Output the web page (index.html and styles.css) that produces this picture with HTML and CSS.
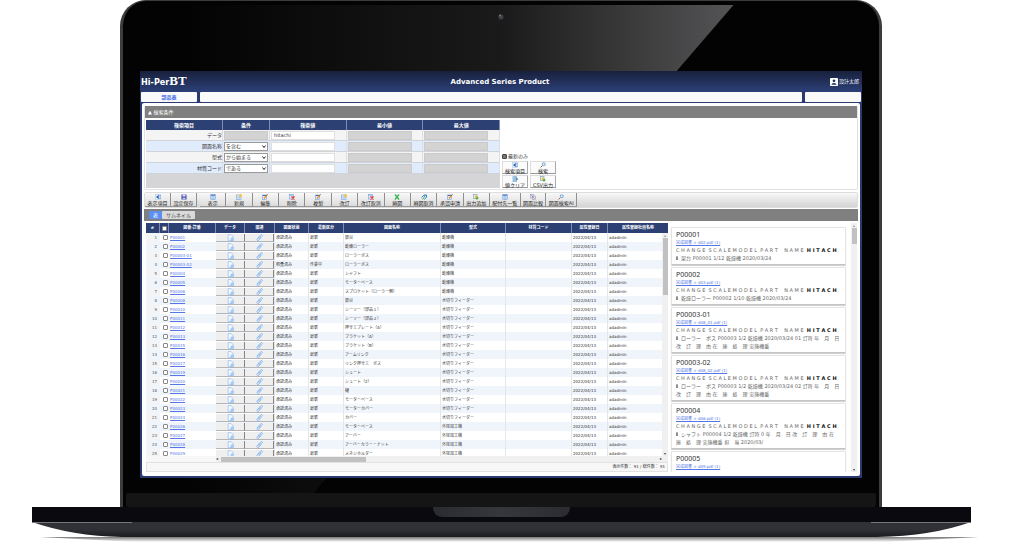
FILE: index.html
```html
<!DOCTYPE html>
<html lang="ja">
<head>
<meta charset="utf-8">
<title>Advanced Series Product</title>
<link rel="stylesheet" href="styles.css">
</head>
<body>
<svg class="sprite" aria-hidden="true">
  <symbol id="i-cols" viewBox="0 0 12 12"><rect x="1" y="1" width="10" height="10" fill="#e6f0fb" stroke="#a9c4e6"/><path d="M7 2v8M9 3h2M9 6h2M9 9h2" stroke="#2c6fc4" stroke-width="1.5"/><path d="M6 3L2 6l4 3z" fill="#2f5f9e"/></symbol>
  <symbol id="i-save" viewBox="0 0 12 12"><path d="M1 1h9l1 1v9H1z" fill="#3b3f9c"/><rect x="3" y="1" width="6" height="4" fill="#e8ecff"/><rect x="3" y="7" width="6" height="4" fill="#b9c1ea"/></symbol>
  <symbol id="i-list" viewBox="0 0 12 12"><rect x="1.500" y="1" width="9" height="10" fill="#dbe9fb" stroke="#5d8fd4"/><path d="M2 2.500h8" stroke="#3c6fc2" stroke-width="2"/><path d="M3 5.500h6M3 7.500h6M3 9.500h6" stroke="#7ba5dd"/></symbol>
  <symbol id="i-new" viewBox="0 0 12 12"><rect x="1" y="2" width="9" height="9" fill="#dfeafa" stroke="#5d8fd4"/><path d="M3 6h5M3 8h5" stroke="#7ba5dd"/><circle cx="9" cy="3" r="3" fill="#f5c232"/></symbol>
  <symbol id="i-edit" viewBox="0 0 12 12"><rect x="1" y="2" width="8" height="9" fill="#dfeafa" stroke="#5d8fd4"/><path d="M2 3h6" stroke="#3c6fc2" stroke-width="2"/><path d="M4 9l6-7" stroke="#e89a20" stroke-width="2.500"/><path d="M9 3l2-2" stroke="#8a2b2b" stroke-width="2"/></symbol>
  <symbol id="i-del" viewBox="0 0 12 12"><rect x="1" y="1" width="8" height="9" fill="#dfeafa" stroke="#5d8fd4"/><path d="M2 3h6" stroke="#7ba5dd"/><path d="M5 5l6 6M11 5l-6 6" stroke="#ea2f2f" stroke-width="2.500"/></symbol>
  <symbol id="i-x" viewBox="0 0 12 12"><path d="M2 1l8 10M10 1L2 11" stroke="#35b44a" stroke-width="2.500"/></symbol>
  <symbol id="i-undo" viewBox="0 0 12 12"><path d="M3 11l6-9" stroke="#35b44a" stroke-width="2"/><path d="M1 7l5-5h5v4L7 11" fill="none" stroke="#3b78d8" stroke-width="2"/></symbol>
  <symbol id="i-out" viewBox="0 0 12 12"><rect x="1" y="1" width="7" height="8" fill="#f3e7b8" stroke="#5d8fd4"/><circle cx="8" cy="8" r="3" fill="#5fae4a"/><circle cx="6" cy="5" r="2" fill="#eebc36"/></symbol>
  <symbol id="i-cmp" viewBox="0 0 12 12"><rect x="1" y="1" width="6" height="7" fill="#dfeafa" stroke="#7d8fb8"/><rect x="5" y="4" width="6" height="7" fill="#f4dfe4" stroke="#7d8fb8"/><path d="M3 3l6 6" stroke="#d04848" stroke-width="1.500"/></symbol>
  <symbol id="i-find" viewBox="0 0 12 12"><path d="M1 11l4-4" stroke="#a86a3c" stroke-width="2"/><circle cx="7.500" cy="4.500" r="3" fill="#e4f2fd" stroke="#4d8fc7" stroke-width="1.500"/></symbol>
  <symbol id="i-clear" viewBox="0 0 12 12"><path d="M1 2h9M1 6h9M1 10h9" stroke="#3f86c9" stroke-width="2"/><path d="M9 3l3 3-3 3z" fill="#1f4f94"/></symbol>
  <symbol id="i-doc" viewBox="0 0 12 12"><path d="M2 1h5l3 3v7H2z" fill="#f3f8ff" stroke="#7db2f2"/><path d="M7 7h4v4H7z" fill="#bcd9fb" stroke="#7db2f2"/></symbol>
  <symbol id="i-clip" viewBox="0 0 12 12"><path d="M10 4L5 10.500a1.700 1.700 0 0 1-3-2L8 1.500a1.500 1.500 0 0 1 2.500 2M8 4L4.500 8.500" fill="none" stroke="#7db2f2" stroke-width="1.500"/></symbol>
</svg>

<div class="laptop">
  <div class="lid">
    <svg class="camera" viewBox="0 0 10 10" aria-hidden="true"><circle cx="5" cy="5" r="4.500" fill="#1c1c1e"/><circle cx="5" cy="5" r="2.500" fill="#3d4044"/><circle cx="4" cy="3.500" r="1" fill="#777b80"/></svg>
    <div class="app">
      <header class="top">
        <div class="logo">Hi-Per<b>BT</b></div>
        <h1>Advanced Series Product</h1>
        <div class="user"><svg viewBox="0 0 10 10" aria-hidden="true"><rect width="10" height="10" rx="1" fill="#fff"/><circle cx="5" cy="3.500" r="1.700" fill="#22305c"/><path d="M2 8.500V7.500Q5 5 8 7.500v1z" fill="#22305c"/></svg>設計太郎</div>
      </header>
      <nav class="tabs"><a href="#">部品表</a><span></span><span></span></nav>
      <main>
        <section class="panel">
          <h2 class="bar">▲ 検索条件</h2>
          <form class="search">
            <table class="cond">
              <colgroup><col class="c-item"><col class="c-op"><col><col><col></colgroup>
              <thead><tr><th>検索項目</th><th>条件</th><th>検索値</th><th>最小値</th><th>最大値</th></tr></thead>
              <tbody>
                <tr><td><label for="v1">データ</label></td><td><input class="full" disabled aria-label="条件"></td><td><input id="v1" value="hitachi"></td><td><input disabled aria-label="最小値"></td><td><input disabled aria-label="最大値"></td></tr>
                <tr><td><label for="v2">図面名称</label></td><td><select aria-label="条件"><option>を含む</option></select></td><td><input id="v2"></td><td><input disabled aria-label="最小値"></td><td><input disabled aria-label="最大値"></td></tr>
                <tr><td><label for="v3">型式</label></td><td><select aria-label="条件"><option>から始まる</option></select></td><td><input id="v3"></td><td><input disabled aria-label="最小値"></td><td><input disabled aria-label="最大値"></td></tr>
                <tr><td><label for="v4">材質コード</label></td><td><select aria-label="条件"><option>である</option></select></td><td><input id="v4"></td><td><input disabled aria-label="最小値"></td><td><input disabled aria-label="最大値"></td></tr>
              </tbody>
            </table>
            <div class="actions">
              <label class="latest"><input type="checkbox" checked>最新のみ</label>
              <button type="button"><svg><use href="#i-cols"/></svg>検索項目</button>
              <button type="button"><svg><use href="#i-find"/></svg>検索</button>
              <button type="button"><svg><use href="#i-clear"/></svg>値クリア</button>
              <button type="button"><svg><use href="#i-out"/></svg>CSV出力</button>
            </div>
          </form>
        </section>

        <div class="toolbar">
          <div class="group g-set">
            <button type="button"><svg><use href="#i-cols"/></svg>表示項目</button>
            <button type="button"><svg><use href="#i-save"/></svg>設定保存</button>
          </div>
          <div class="group g-edit">
            <button type="button"><svg><use href="#i-list"/></svg>表示</button>
            <button type="button"><svg><use href="#i-new"/></svg>新規</button>
            <button type="button"><svg><use href="#i-edit"/></svg>編集</button>
            <button type="button"><svg><use href="#i-del"/></svg>削除</button>
            <button type="button"><svg><use href="#i-edit"/></svg>複製</button>
            <button type="button"><svg><use href="#i-new"/></svg>改訂</button>
            <button type="button"><svg><use href="#i-del"/></svg>改訂取消</button>
            <button type="button"><svg><use href="#i-x"/></svg>廃図</button>
            <button type="button"><svg><use href="#i-undo"/></svg>廃図取消</button>
            <button type="button"><svg><use href="#i-edit"/></svg>承認申請</button>
            <button type="button"><svg><use href="#i-out"/></svg>出力追加</button>
          </div>
          <div class="group g-more">
            <button type="button"><svg><use href="#i-list"/></svg>配付先一覧</button>
            <button type="button"><svg><use href="#i-cmp"/></svg>図面比較</button>
            <button type="button"><svg><use href="#i-find"/></svg>図面検索AI</button>
          </div>
        </div>

        <div class="bar views"><button type="button" class="on">表</button><button type="button">サムネイル</button></div>

        <div class="results">
          <section class="list">
            <div class="viewport">
              <table class="parts">
                <colgroup><col class="w14"><col class="w9"><col class="w47"><col class="w29"><col class="w30"><col class="w34"><col class="w35"><col><col class="w65"><col class="w66"><col class="w36"><col class="w60"></colgroup>
                <thead><tr><th>#</th><th><input type="checkbox" aria-label="すべて選択"></th><th>図番-訂番</th><th>データ</th><th>関連</th><th>図面状態</th><th>最新区分</th><th>図面名称</th><th>型式</th><th>材質コード</th><th>属性登録日</th><th>属性登録社員名称</th></tr></thead>
                <tbody id="rows"></tbody>
              </table>
              <div class="vbar"><i></i></div>
            </div>
            <div class="hbar"><span>◂</span><i></i><span class="end">▸</span></div>
            <footer>表示件数： 91 / 総件数： 91</footer>
          </section>
          <section class="hits">
            <div class="cards">
              <article><h3>P00001</h3><a href="#">完成図書 &gt; d02.pdf (1)</a><p>C H A N G E  S C A L E M O D E L  P A R T    N A M E  <b>H I T A C H</b>
<b>I</b>  架台 P00001 1/12 乾燥機 2020/03/24</p></article>
              <article><h3>P00002</h3><a href="#">完成図書 &gt; d03.pdf (1)</a><p>C H A N G E  S C A L E M O D E L  P A R T    N A M E  <b>H I T A C H</b>
<b>I</b>  乾燥ローラー P00002 1/10 乾燥機 2020/03/24</p></article>
              <article><h3>P00003-01</h3><a href="#">完成図書 &gt; d08_01.pdf (1)</a><p>C H A N G E  S C A L E M O D E L  P A R T    N A M E  <b>H I T A C H</b>
<b>I</b>  ローラー　ボス P00003 1/2 乾燥機 2020/03/24 01 訂符 年　月　日
改　訂　理　由 在　庫　処　理 実施機番</p></article>
              <article><h3>P00003-02</h3><a href="#">完成図書 &gt; d08_02.pdf (1)</a><p>C H A N G E  S C A L E M O D E L  P A R T    N A M E  <b>H I T A C H</b>
<b>I</b>  ローラー　ボス P00003 1/2 乾燥機 2020/03/24 02 訂符 年　月　日
改　訂　理　由 在　庫　処　理 実施機番</p></article>
              <article><h3>P00004</h3><a href="#">完成図書 &gt; d06.pdf (1)</a><p>C H A N G E  S C A L E M O D E L  P A R T    N A M E  <b>H I T A C H</b>
<b>I</b>  シャフト P00004 1/2 乾燥機 訂符 0 年　月　日 改　訂　理　由 在
庫　処　理 実施機番 担　当 2020/03/</p></article>
              <article><h3>P00005</h3><a href="#">完成図書 &gt; d09.pdf (1)</a></article>
            </div>
            <div class="vbar"><i></i></div>
          </section>
        </div>
      </main>
    </div>
    <div class="chin"></div>
  </div>
  <div class="deck"><div class="notch"></div></div>
  <svg class="foot" viewBox="0 0 939 15" preserveAspectRatio="none" aria-hidden="true">
    <defs><linearGradient id="fg" x1="0" y1="0" x2="0" y2="1"><stop offset="0.500" stop-color="#303136"/><stop offset="1" stop-color="#1b1c20"/></linearGradient></defs>
    <path d="M0 0H939Q900 14 845 15H90Q40 14 0 0z" fill="url(#fg)"/><path d="M0 .5H100M839 .5H939" stroke="#77787c"/>
  </svg>
  <div class="shadow"></div>
</div>
<script src="rows.js"></script>
</body>
</html>
```
FILE: styles.css
```css
* { box-sizing: border-box; }
body { margin: 0; background: #fff; overflow: hidden; color: #333; font: 4px/9px "DejaVu Sans", "Noto Sans CJK JP", sans-serif; }
button, input, select { font: inherit; color: inherit; margin: 0; padding: 0; border-radius: 0; }
h1, h2, h3, p { margin: 0; font-weight: normal; }
table { border-collapse: separate; border-spacing: 0; table-layout: fixed; width: 100%; }
th, td { padding: 0; white-space: nowrap; overflow: hidden; }
a { color: #5577e6; }
.sprite { display: none; }

/* laptop */
.lid { position: relative; margin: 0 137px 0 120px; padding: 70px 17px 0; border: solid #3c3c3f; border-width: 1px 3px 0; border-radius: 26px 26px 0 0; background: #030303; }
.lid::before { content: ""; position: absolute; inset: 4px 3px 14px; background: linear-gradient(90deg, #030303 8%, #1a1a1a 50%, #565658 82%); clip-path: polygon(3% 0, 81% 0, 25% 100%, 3% 100%); }
.camera { position: absolute; left: 50%; top: 11px; width: 10px; height: 10px; margin-left: -5px; }
.chin { position: relative; height: 14px; margin: 15px -14px 0; background: #151515; border-radius: 2px; }
.deck { margin: 0 48px 0 32px; height: 15px; background: #09090f; }
.notch { width: 137px; height: 10px; margin: 0 auto; background: linear-gradient(90deg, #2b2c31, #36373b, #2b2c31); border-radius: 0 0 9px 9px; }
.foot { display: block; width: calc(100% - 80px); height: 15px; margin-left: 32px; }
.shadow { height: 5px; background: linear-gradient(#0008, #0000); margin: 0 40px; clip-path: polygon(0 0, 100% 0, 90% 100%, 10% 100%); }

/* application frame */
.app { position: relative; background: #293b70; padding: 0 2px 2px; }
.top { display: grid; grid-template-columns: 1fr auto 1fr; align-items: center; height: 21px; margin: 0 -2px; padding: 0 3px 0 1px; background: linear-gradient(#18203c, #2c4078); color: #fff; }
.logo { font: bold 9px/12px "DejaVu Sans Condensed", sans-serif; }
.logo b { font: bold 13px/12px "Liberation Serif", serif; }
.top h1 { font: bold 7px/12px "DejaVu Sans", "Noto Sans", sans-serif; }
.user { display: flex; justify-content: flex-end; align-items: center; gap: 1px; font-size: 5px; }
.user svg { width: 8px; height: 8px; }
.tabs { display: grid; grid-template-columns: 56px 1fr 56px; gap: 3px; height: 10px; margin: 0 -1px 1px; }
.tabs > * { background: #fafafa; border-radius: 1px; text-align: center; font-size: 5px; font-weight: bold; line-height: 10px; text-decoration: none; color: #4468e8; }
main { background: #fff; border-radius: 2px; padding: 3px 2px 4px; }
.bar { background: #808080; color: #fff; font-size: 5px; line-height: 12px; padding: 0 3px; }
.panel { border: 1px solid #e2e2e2; border-top: 0; border-radius: 2px; }

/* search form */
.search { display: flex; gap: 2px; padding: 2px 1px 1px; }
.cond { font-size: 5px; }
.search .cond { flex: 0 0 354px; width: 354px; height: 53px; border-bottom: 14px solid #d5d5d7; box-sizing: content-box; }
.c-item { width: 77px; }
.c-op { width: 47px; }
.cond th { background: #2c4074; color: #fff; height: 10px; line-height: 10px; font-weight: bold; border-right: 1px solid #7f8bb0; }
.cond td { height: 11px; line-height: 10px; background: #f4f4f4; border-bottom: 1px solid #d0d3d8; border-right: 1px solid #dcdfe5; }
.cond tr:nth-child(even) td { background: #e0ebfb; }
.cond td:first-child { text-align: right; }
.cond input, .cond select { display: block; width: 64px; height: 9px; margin-left: 1px; border: 1px solid #dedede; background: #fff; line-height: 7px; padding: 0 2px; }
.cond input:disabled { background: #d3d3d3; border-color: #cacaca; }
.cond .full, .cond select { width: 44px; }
.cond select { appearance: none; border-color: #999; padding: 0 1px; background: #fff url("data:image/svg+xml,%3Csvg xmlns='http://www.w3.org/2000/svg' viewBox='0 0 8 6'%3E%3Cpath d='M1 1l3 4 3-4' fill='none' stroke='%23222' stroke-width='2'/%3E%3C/svg%3E") no-repeat right 1px center / 4px 3px; }
.actions { display: grid; grid-template-columns: 26px 26px; gap: 1px 2px; align-content: end; }
.latest { grid-column: 1 / -1; display: flex; align-items: center; gap: 1px; font-size: 5px; line-height: 8px; }
input[type="checkbox"] { appearance: none; display: block; width: 5px; height: 5px; border: 1px solid #888; border-radius: 1px; background: #fff; }
.latest input:checked { background: #777; border-color: #444; }
.actions button, .group button { display: flex; flex-direction: column; align-items: center; justify-content: center; height: 13px; font-size: 5px; line-height: 6px; white-space: nowrap; color: #222; border: 0; background: #fbfbfb; border-right: 1px solid #aaa; border-bottom: 1px solid #999; }
.actions button { border-top: 1px solid #ddd; border-left: 1px solid #ddd; }
.actions svg, .group svg { width: 6px; height: 6px; flex: none; }

/* toolbar */
.toolbar { display: flex; gap: 3px; height: 16px; margin: 2px 0 1px; border: 1px solid #ddd; border-radius: 2px; background: linear-gradient(#f8f8f8, #d3d3d3); }
.group { display: grid; grid-auto-flow: column; grid-auto-columns: 1fr; }
.group button { height: 14px; background: linear-gradient(#f8f8f8, #dcdcdc); padding: 0; border-right-color: #8f8f8f; }
.g-set { width: 52px; }
.g-edit { width: 290px; }
.g-more { grid-auto-columns: auto; width: 87px; }
.toolbar .g-more { margin-left: -3px; }

.views { display: flex; align-items: center; height: 12px; padding: 0 5px; }
.views button { height: 8px; line-height: 8px; padding: 0 4px; border: 0; border-radius: 1px; background: #dadada; color: #444; }
.views .on { background: #5b8ff0; color: #fff; }

/* result list */
.results { display: grid; grid-template-columns: minmax(0, 1fr) 187px; gap: 2px; padding: 2px 1px 0 2px; height: 251px; }
.list { display: flex; flex-direction: column; background: #f7f7f7; }
.viewport { position: relative; height: 233px; overflow: hidden; background: #fff; }
.parts th { height: 10px; line-height: 10px; background: #2c4074; color: #fff; font-weight: bold; border-right: 1px solid #7f8bb0; }
.parts th:last-child { border: 0; }
.parts td { height: 9px; line-height: 9px; padding-left: 1px; border-right: 1px solid #e3e6ea; }
.parts tr:nth-child(even) td { background: #f0f5fc; }
.parts td:first-child { text-align: right; padding-right: 3px; color: #555; background: #f3f4f6; }
.parts td:nth-child(-n+4) { border-right: 0; }
.parts th input, .parts td input { margin: 0 auto; }
.parts td:nth-child(4), .parts td:nth-child(5) { padding: 0; }
.parts td button { display: flex; align-items: center; justify-content: center; width: 100%; height: 8px; background: #efefef; border: solid; border-width: 0 1px 1px 0; border-color: #e0e0e0 #858585 #b5b5b5; }
.parts td svg { width: 7px; height: 7px; }
.w9 { width: 9px; } .w14 { width: 14px; } .w29 { width: 29px; } .w30 { width: 30px; } .w34 { width: 34px; } .w35 { width: 35px; }
.w36 { width: 36px; } .w47 { width: 47px; } .w60 { width: 60px; } .w65 { width: 65px; } .w66 { width: 66px; }
.vbar { background: #f0f0f0; width: 6px; display: flex; flex-direction: column; align-items: center; line-height: 5px; color: #444; }
.vbar::before { content: "▴"; color: #999; }
.vbar::after { content: "▾"; margin-top: auto; }
.vbar i { width: 5px; background: #c1c1c1; }
.viewport .vbar { position: absolute; right: 0; top: 10px; bottom: 0; }
.viewport .vbar i { height: 57px; }
.hbar { display: flex; align-items: center; height: 6px; line-height: 6px; margin-left: 70px; background: #f0f0f0; padding-right: 6px; }
.hbar i { height: 5px; width: 145px; margin-left: 3px; background: #c1c1c1; }
.hbar .end { margin-left: auto; }
.list footer { text-align: right; padding-right: 2px; border: 1px solid #e2e2e2; flex: 1; line-height: 8px; }

/* drawing hits */
.hits { display: flex; justify-content: space-between; overflow: hidden; }
.cards { flex: 1; margin-right: 4px; padding: 4px 1px 0; overflow: hidden; }
.cards article { min-height: 38px; padding: 2px 4px; margin-bottom: 2px; border: 1px solid #e4e4e4; border-bottom-color: #c4c4c4; border-radius: 1px; box-shadow: 0 1px 1px #ccc; }
.cards h3 { font: 7px/10px "Noto Sans", sans-serif; }
.cards a { display: block; line-height: 6px; }
.cards p { font-size: 5px; line-height: 8px; white-space: pre; color: #666; }
.cards b { color: #111; }
.hits .vbar i { height: 16px; }
```
FILE: rows.js
```js
const K = "乾燥機", F = "水切りフィーダー", G = "外径加工機";
const parts = [
  ["P00001", "架台", K], ["P00002", "乾燥ローラー", K], ["P00003-01", "ローラーボス", K],
  ["P00003-02", "ローラーボス", K, "照査済み", "作業中"], ["P00004", "シャフト", K],
  ["P00005", "モーターベース", K], ["P00006", "スプロケット（ローラー側）", K], ["P00008", "架台", F],
  ["P00010", "シーソー（部品１）", F], ["P00011", "シーソー（部品２）", F], ["P00012", "押サエプレート（A）", F],
  ["P00013", "ブラケット（A）", F], ["P00015", "ブラケット（B）", F], ["P00016", "アームリンク", F],
  ["P00017", "リンク押サエ　ボス", F], ["P00019", "シュート", F], ["P00020", "シュート（2）", F],
  ["P00021", "樋", F], ["P00022", "モーターベース", F], ["P00023", "モーターカバー", F],
  ["P00024", "カバー", F], ["P00026", "モーターベース", G], ["P00027", "アーバー", G],
  ["P00028", "アーバーカラー・ナット", G], ["P00029", "メネジホルダー", G]
];
document.getElementById("rows").innerHTML = parts.map(([no, name, model, state = "承認済み", rev = "最新"], i) => `
<tr><td>${i + 1}</td><td><input type="checkbox" aria-label="${no}"></td><td><a href="#">${no}</a></td>
<td><button type="button" aria-label="データ"><svg><use href="#i-doc"/></svg></button></td>
<td><button type="button" aria-label="関連"><svg><use href="#i-clip"/></svg></button></td>
<td>${state}</td><td>${rev}</td><td>${name}</td><td>${model}</td><td></td><td>2022/04/13</td><td>adadmin</td></tr>`).join("");
```
